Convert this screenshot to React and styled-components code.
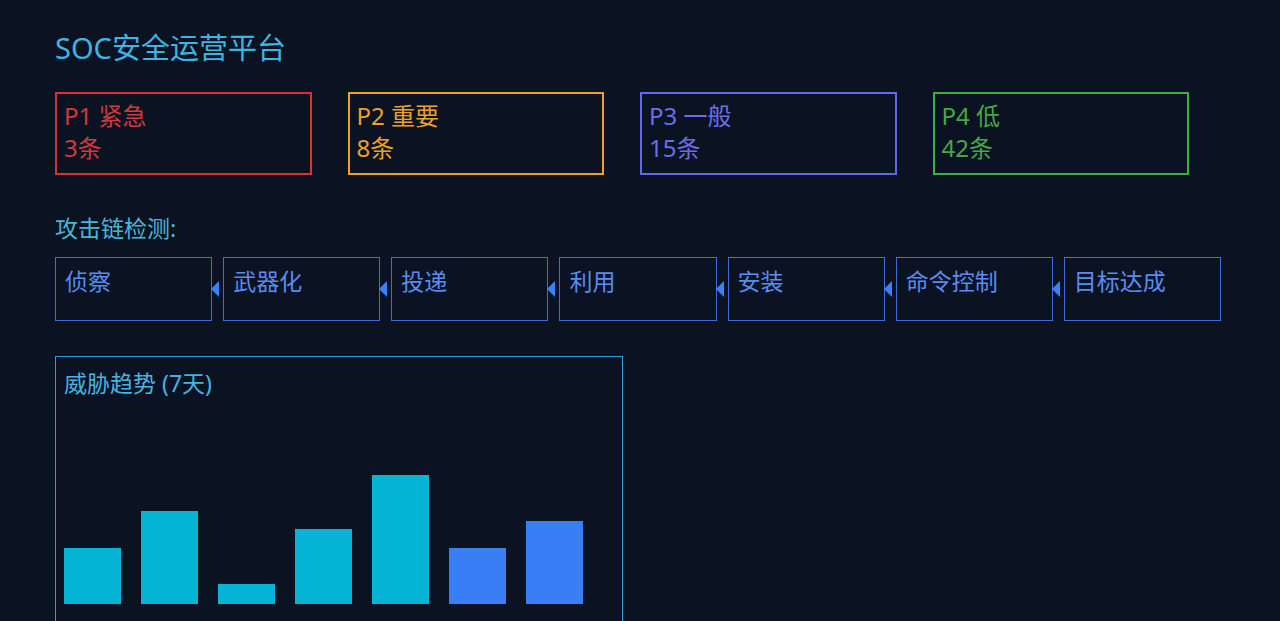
import React from "react";
import styled, { createGlobalStyle } from "styled-components";

const GlobalStyle = createGlobalStyle`
  html, body {
    margin: 0;
    padding: 0;
    background: #0b1322;
  }
  body {
    font-family: "Noto Sans", "Noto Sans CJK SC", sans-serif;
  }
`;

const Page = styled.div`
  box-sizing: border-box;
  width: 1280px;
  padding: 30px 55px 0;
  background: #0b1322;
`;

const Title = styled.h1`
  margin: 0 0 26px;
  font-size: 29px;
  line-height: 36px;
  font-weight: 400;
  color: #3db5e2;
`;

const PriorityRow = styled.div`
  display: grid;
  grid-template-columns: repeat(4, 1fr);
  column-gap: 36px;
  padding-right: 36px;
`;

const PriorityCard = styled.div`
  box-sizing: border-box;
  height: 83px;
  border: 2px solid ${(p) => p.$color};
  color: ${(p) => p.$text};
  padding: 6px 7px;
  font-size: 24px;
  line-height: 32px;
`;

const SectionLabel = styled.div`
  margin-top: 40px;
  font-size: 23px;
  line-height: 26px;
  color: #47b6d6;
`;

const Chain = styled.div`
  display: flex;
  gap: 11px;
  width: 1166px;
  margin-top: 16px;
`;

const Stage = styled.div`
  position: relative;
  box-sizing: border-box;
  flex: 1;
  height: 64px;
  border: 1px solid #3d6fd9;
  padding: 6px 9px;
  font-size: 23px;
  line-height: 34px;
  color: #5a8cf0;

  &:not(:first-child)::before {
    content: "";
    position: absolute;
    left: -13px;
    top: 50%;
    margin-top: -8px;
    border-right: 8px solid #3b82f6;
    border-top: 8px solid transparent;
    border-bottom: 8px solid transparent;
  }
`;

const ChartPanel = styled.div`
  box-sizing: border-box;
  width: 568px;
  margin-top: 35px;
  border: 1px solid #2b9fd4;
  padding: 10px 8px 24px;
`;

const ChartTitle = styled.div`
  font-size: 23px;
  line-height: 32px;
  color: #46b3e2;
`;

const Bars = styled.div`
  display: flex;
  align-items: flex-end;
  gap: 20px;
  height: 205px;
`;

const Bar = styled.div`
  width: 57px;
  background: ${(p) => p.$color};
`;

const priorities = [
  { label: "P1 紧急", count: "3条", color: "#d93236", text: "#d2393d" },
  { label: "P2 重要", count: "8条", color: "#f0a21e", text: "#eaa12a" },
  { label: "P3 一般", count: "15条", color: "#6366f1", text: "#6b6ee8" },
  { label: "P4 低", count: "42条", color: "#3daf3f", text: "#45a845" },
];

const stages = ["侦察", "武器化", "投递", "利用", "安装", "命令控制", "目标达成"];

const trend = [
  { h: 56, color: "#06b4d6" },
  { h: 93, color: "#06b4d6" },
  { h: 20, color: "#06b4d6" },
  { h: 75, color: "#06b4d6" },
  { h: 129, color: "#06b4d6" },
  { h: 56, color: "#3a7ef5" },
  { h: 83, color: "#3a7ef5" },
];

export default function App() {
  return (
    <>
      <GlobalStyle />
      <Page>
        <Title>SOC安全运营平台</Title>
        <PriorityRow>
          {priorities.map((p) => (
            <PriorityCard key={p.label} $color={p.color} $text={p.text}>
              <div>{p.label}</div>
              <div>{p.count}</div>
            </PriorityCard>
          ))}
        </PriorityRow>
        <SectionLabel>攻击链检测:</SectionLabel>
        <Chain>
          {stages.map((s) => (
            <Stage key={s}>{s}</Stage>
          ))}
        </Chain>
        <ChartPanel>
          <ChartTitle>威胁趋势 (7天)</ChartTitle>
          <Bars>
            {trend.map((b, i) => (
              <Bar key={i} $color={b.color} style={{ height: b.h }} />
            ))}
          </Bars>
        </ChartPanel>
      </Page>
    </>
  );
}
